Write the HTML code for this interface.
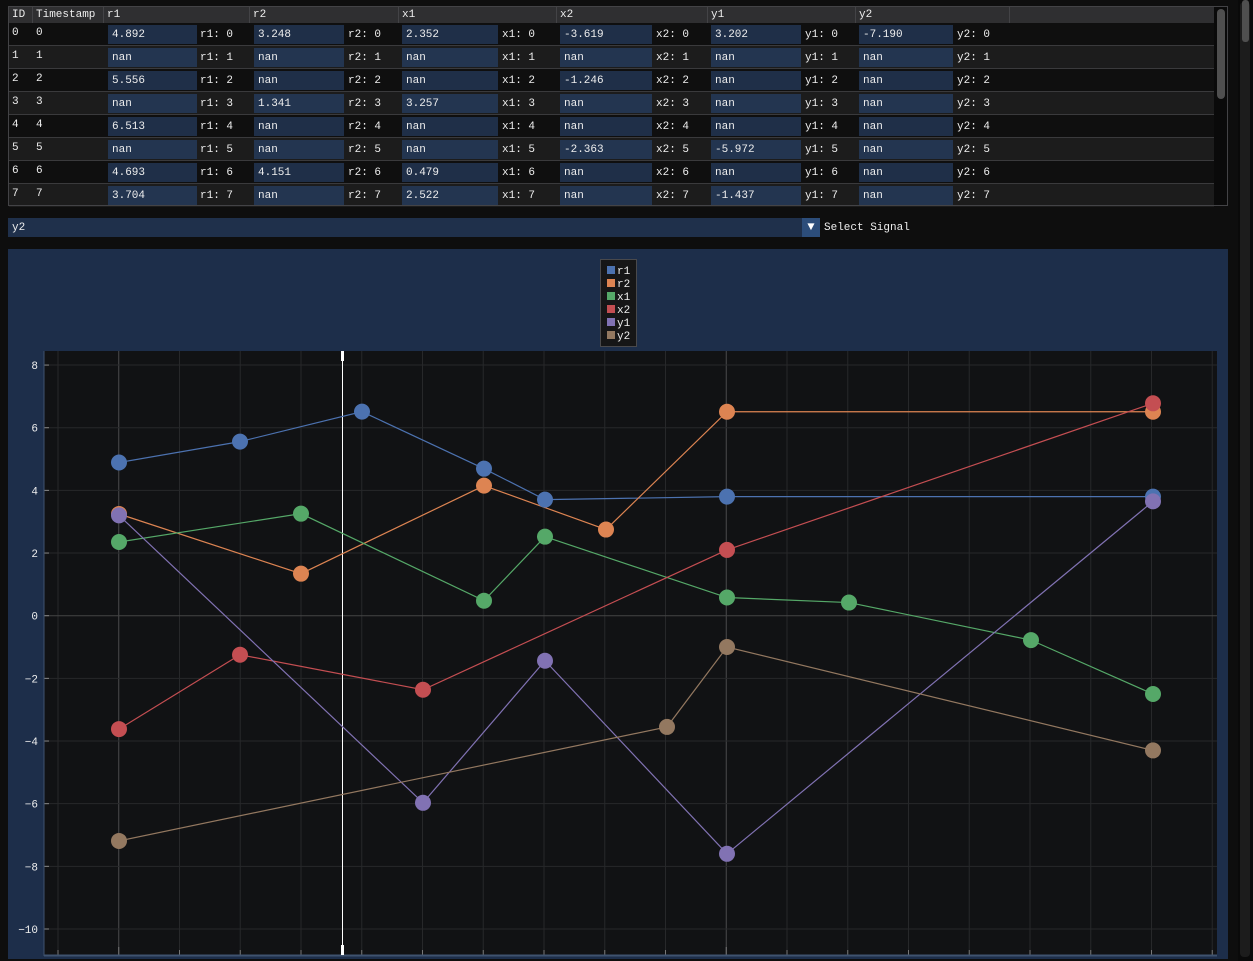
<!DOCTYPE html>
<html><head><meta charset="utf-8"><style>
*{margin:0;padding:0;box-sizing:border-box}
body{width:1253px;height:961px;background:#0e0e0e;overflow:hidden;position:relative;font-family:"Liberation Mono","DejaVu Sans Mono",monospace;font-size:11px;color:#eee}
.a{position:absolute;white-space:pre;line-height:16px}
.box{position:absolute;height:19px;background:#213450}
</style></head><body>
<div class="a" style="left:8px;top:6px;width:1220px;height:200px;border:1px solid #434346;background:#0f0f0f"></div>
<div class="a" style="left:9px;top:7px;width:1205px;height:16px;background:#2f2f31"></div>
<div id="t"></div>
<div class="a" style="left:1214px;top:7px;width:13px;height:198px;background:#0a0a0a"></div>
<div class="a" style="left:1217px;top:9px;width:8px;height:90px;background:#4f4f4f;border-radius:4px"></div>
<div class="a" style="left:1238px;top:0;width:15px;height:961px;background:#0a0a0a"></div>
<div class="a" style="left:1240px;top:2px;width:10px;height:955px;background:#1c1c1c;border-radius:4px"></div>
<div class="a" style="left:1242px;top:0;width:7px;height:42px;background:#4f4f4f;border-radius:3px"></div>
<div class="a" style="left:8px;top:218px;width:812px;height:19px;background:#1f304b"></div>
<div class="a" style="left:12px;top:220px">y2</div>
<div class="a" style="left:802px;top:218px;width:18px;height:19px;background:#2c4d7a;color:#fff;text-align:center;line-height:19px;font-size:12px">▼</div>
<div class="a" style="left:824px;top:220px">Select Signal</div>
<svg class="a" style="left:0;top:0" width="1253" height="961" id="p"></svg>
<script>
const cols=[[8,32,"ID"],[32,103,"Timestamp"],[103,249,"r1"],[249,398,"r2"],[398,556,"x1"],[556,707,"x2"],[707,855,"y1"],[855,1009,"y2"],[1009,1214,""]];
const boxes=[["r1",108,197,200],["r2",254,344,348],["x1",402,498,502],["x2",560,652,656],["y1",711,801,805],["y2",859,953,957]];
const vals=[["4.892","3.248","2.352","-3.619","3.202","-7.190"],["nan","nan","nan","nan","nan","nan"],["5.556","nan","nan","-1.246","nan","nan"],["nan","1.341","3.257","nan","nan","nan"],["6.513","nan","nan","nan","nan","nan"],["nan","nan","nan","-2.363","-5.972","nan"],["4.693","4.151","0.479","nan","nan","nan"],["3.704","nan","2.522","nan","-1.437","nan"]];
let h="";
cols.forEach((c,i)=>{h+=`<div class="a" style="left:${c[0]+4}px;top:7px">${c[2]}</div>`;if(i)h+=`<div class="a" style="left:${c[0]}px;top:7px;width:1px;height:16px;background:#434346"></div>`;});
for(let r=0;r<8;r++){const y=23+r*23;
h+=`<div class="a" style="left:9px;top:${y}px;width:1205px;height:23px;background:${r%2?'#1c1c1c':'#0f0f0f'}"></div>`;
if(r)h+=`<div class="a" style="left:9px;top:${y-1}px;width:1205px;height:1px;background:#3a3a3c"></div>`;
h+=`<div class="a" style="left:12px;top:${y+2}px">${r}</div><div class="a" style="left:36px;top:${y+2}px">${r}</div>`;
boxes.forEach((b,j)=>{h+=`<div class="box" style="left:${b[1]}px;top:${y+2}px;width:${b[2]-b[1]}px;background:${r%2?'#233550':'#1f2f48'}"></div><div class="a" style="left:${b[1]+4}px;top:${y+4}px">${vals[r][j]}</div><div class="a" style="left:${b[3]}px;top:${y+4}px">${b[0]}: ${r}</div>`;});}
h+=`<div class="a" style="left:9px;top:205px;width:1205px;height:1px;background:#434346"></div>`;
document.getElementById("t").innerHTML=h;
const Y=v=>615.7-v*31.33;
let s=`<rect x="8" y="249" width="1220" height="710" fill="#1d2e4a"/><rect x="44" y="351" width="1173" height="604" fill="#111214"/>`;
for(let x=58;x<1217;x+=60.75){const b=Math.abs(x-119)<3||Math.abs(x-727)<3;s+=`<line x1="${x}" y1="351" x2="${x}" y2="955" stroke="${b?'#4a4a4c':'#27282a'}"/>`;s+=`<line x1="${x}" y1="${b?947:950}" x2="${x}" y2="955" stroke="#777"/>`;}
for(let v=-10;v<=8;v+=2){const y=Y(v);s+=`<line x1="44" y1="${y}" x2="1217" y2="${y}" stroke="${v==0?'#444':'#27282a'}"/><line x1="44" y1="${y}" x2="49" y2="${y}" stroke="#888"/><text x="38" y="${y+4}" fill="#eee" font-size="11" text-anchor="end" font-family="Liberation Mono,monospace">${v<0?'−'+(-v):v}</text>`;}
s+=`<line x1="44" y1="351" x2="44" y2="956" stroke="#3f536f"/><line x1="44" y1="955.5" x2="1217" y2="955.5" stroke="#3f536f" stroke-width="2"/>`;
s+=`<line x1="342.5" y1="351" x2="342.5" y2="955" stroke="#fff"/><rect x="341" y="351" width="3" height="10" fill="#fff"/><rect x="341" y="945" width="3" height="10" fill="#fff"/>`;
const S=[["#4c72b0",[[119,4.89],[240,5.556],[362,6.513],[484,4.693],[545,3.704],[727,3.8],[1153,3.8]]],
["#dd8452",[[119,3.248],[301,1.341],[484,4.151],[606,2.75],[727,6.51],[1153,6.51]]],
["#55a868",[[119,2.352],[301,3.257],[484,0.479],[545,2.522],[727,0.58],[849,0.42],[1031,-0.78],[1153,-2.5]]],
["#c44e52",[[119,-3.619],[240,-1.246],[423,-2.363],[727,2.1],[1153,6.78]]],
["#8172b3",[[119,3.202],[423,-5.972],[545,-1.437],[727,-7.6],[1153,3.65]]],
["#937860",[[119,-7.19],[667,-3.55],[727,-1.0],[1153,-4.3]]]];
S.forEach(([c,p])=>{s+=`<polyline fill="none" stroke="${c}" stroke-width="1.2" points="${p.map(q=>q[0]+','+Y(q[1])).join(' ')}"/>`;});
S.forEach(([c,p])=>{p.forEach(q=>s+=`<circle cx="${q[0]}" cy="${Y(q[1])}" r="8" fill="${c}"/>`);});
s+=`<rect x="600.5" y="259.5" width="36" height="87" fill="#161617" stroke="#49494c"/>`;
["r1","r2","x1","x2","y1","y2"].forEach((n,i)=>{const y=266+i*13;s+=`<rect x="607" y="${y}" width="8" height="8" fill="${S[i][0]}"/><text x="617" y="${y+8}" fill="#eee" font-size="11" font-family="Liberation Mono,monospace">${n}</text>`;});
document.getElementById("p").innerHTML=s;
</script>
</body></html>
